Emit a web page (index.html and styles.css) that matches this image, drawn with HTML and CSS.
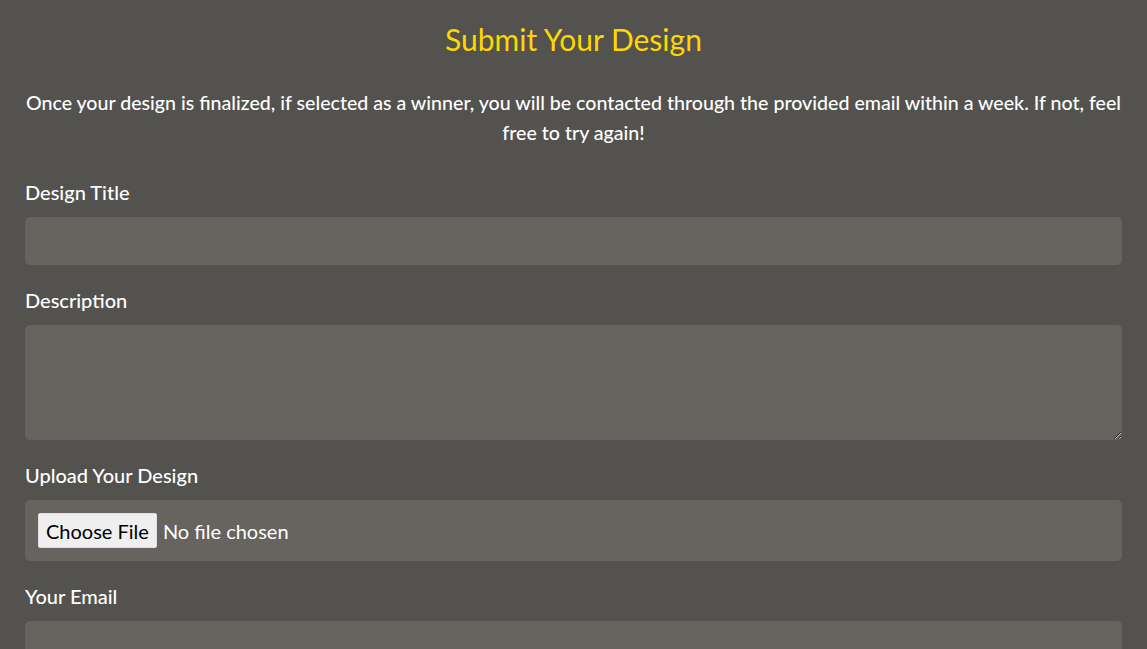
FILE: index.html
```html
<!DOCTYPE html>
<html lang="en">
<head>
<meta charset="utf-8">
<title>Submit Your Design</title>
<link rel="stylesheet" href="styles.css">
</head>
<body>
<main class="container">
  <h1 class="title">Submit Your Design</h1>
  <p class="intro">Once your design is finalized, if selected as a winner, you will be contacted through the provided email within a week. If not, feel free to try again!</p>
  <form class="form">
    <div class="group">
      <label class="label" for="title">Design Title</label>
      <input class="field" id="title" type="text">
    </div>
    <div class="group">
      <label class="label" for="desc">Description</label>
      <textarea class="field area" id="desc"></textarea>
    </div>
    <div class="group">
      <label class="label" for="file">Upload Your Design</label>
      <input class="field file" id="file" type="file">
    </div>
    <div class="group">
      <label class="label" for="email">Your Email</label>
      <input class="field" id="email" type="email">
    </div>
  </form>
</main>
</body>
</html>
```
FILE: styles.css
```css
html, body {
  margin: 0;
  background: #53524e;
}
body {
  font-family: Lato, "Open Sans", sans-serif;
  color: #ffffff;
  font-size: 20px;
  font-weight: 500;
}
.container {
  padding: 21px 25px 40px;
}
.title {
  margin: 0 0 31px;
  color: #ffd700;
  font-size: 30px;
  line-height: 36px;
  font-weight: 400;
  text-align: center;
}
.intro {
  margin: 0 -4px 31px;
  font-size: 19.6px;
  line-height: 30px;
  font-weight: 500;
  text-align: center;
}
.form {
  display: flex;
  flex-direction: column;
  gap: 22px;
}
.group {
  display: flex;
  flex-direction: column;
}
.label {
  display: block;
  font-size: 20px;
  line-height: 26px;
  font-weight: 500;
  margin-bottom: 12px;
}
.field {
  box-sizing: border-box;
  width: 100%;
  height: 48px;
  border: none;
  border-radius: 5px;
  background: #67635f;
  color: #ffffff;
  font-family: inherit;
  font-size: 20px;
  font-weight: 400;
  padding: 10px 12px;
  margin: 0;
  display: block;
}
.area {
  height: 115px;
  resize: vertical;
}
.file {
  height: 61px;
  padding: 13px;
  line-height: 35px;
}
.file::file-selector-button {
  font-family: inherit;
  font-size: 20px;
  font-weight: 400;
  height: 35px;
  padding: 0 7px;
  margin: 0 6px 0 0;
  background: #efefef;
  color: #000;
  border: 1px solid #e0e0e0;
  border-radius: 2px;
}
```
